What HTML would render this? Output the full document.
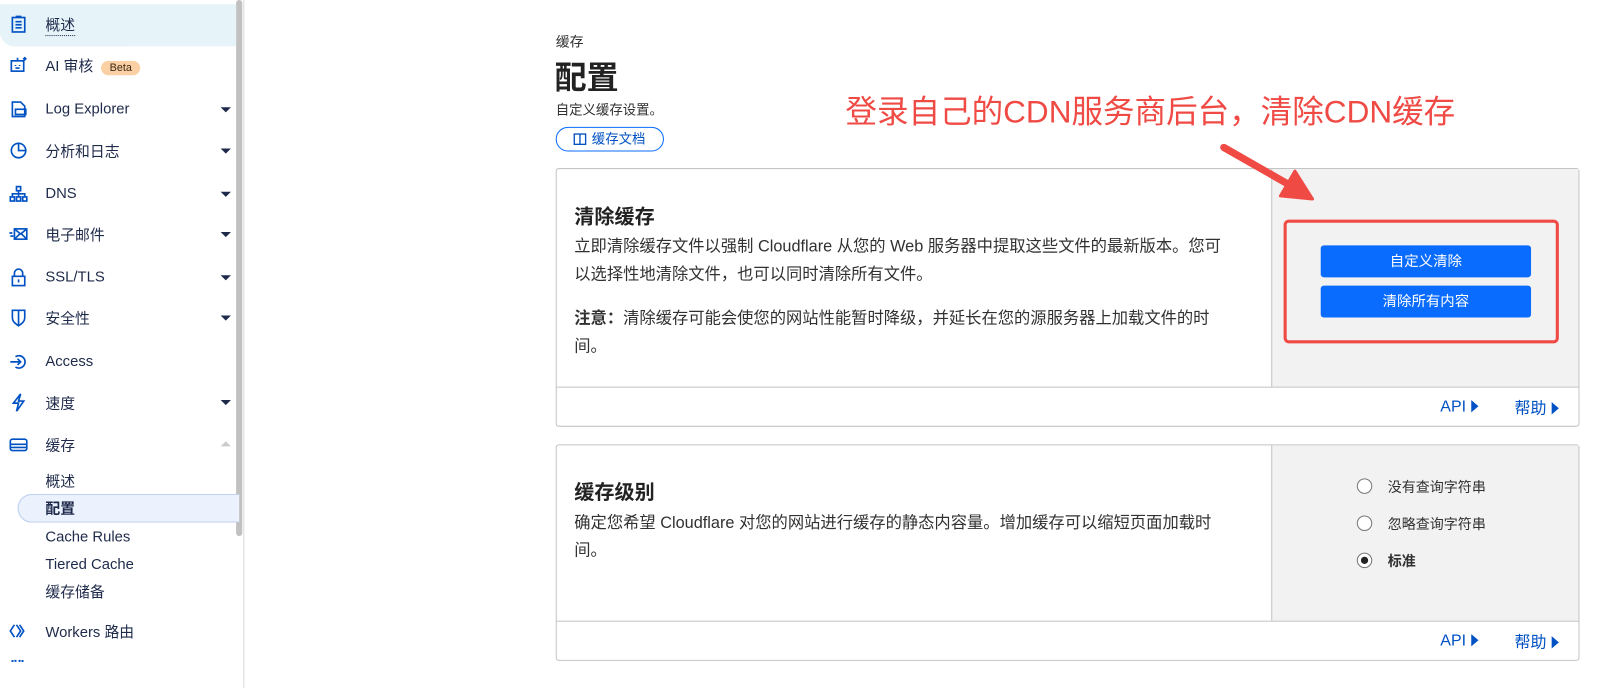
<!DOCTYPE html>
<html><head><meta charset="utf-8"><style>
*{margin:0;padding:0;box-sizing:border-box}
body{width:1617px;height:667px;overflow:hidden;background:#fff;font-family:"Liberation Sans","Noto Sans CJK SC",sans-serif;color:#313131;position:relative}
#w{position:absolute;left:0;top:0;width:1568px;height:647px;transform:scale(1.031);transform-origin:0 0}
.abs{position:absolute}
.side{position:absolute;left:0;top:0;width:237px;height:667px;border-right:1px solid #d9d9d9}
.item{position:absolute;left:0;width:229px;height:40px;font-size:14.4px;color:#1e2a4a;display:flex;align-items:center}
.item .ic{position:absolute;left:9px;top:11px;width:18px;height:18px}
.item .t{position:absolute;left:44px}
.caret{position:absolute;right:5px;top:18px;width:0;height:0;border-left:5px solid transparent;border-right:5px solid transparent;border-top:5px solid #1e2a4a}
.sub{position:absolute;left:44px;font-size:14.4px;color:#1e2a4a}
.card{position:absolute;left:539px;width:993px;border:1px solid #c4c4c4;border-radius:3px;background:#fff}
.gray{position:absolute;right:0;top:0;width:298px;background:#f2f2f2;border-left:1px solid #c4c4c4}
.btn{position:absolute;left:1281px;width:204px;height:31px;background:#0a6cff;border-radius:3px;color:#fff;font-size:14px;text-align:center;line-height:31px}
.lnk{position:absolute;font-size:15.5px;color:#0051c3}
.tri{display:inline-block;width:0;height:0;border-top:6px solid transparent;border-bottom:6px solid transparent;border-left:7px solid #0051c3;margin-left:5px;vertical-align:-1px}
.p{font-size:15.8px;line-height:27px;color:#313131}
.radio{position:absolute;left:1316px;width:15px;height:15px;border:1px solid #777;border-radius:50%;background:#fff}
.rl{position:absolute;left:1346px;font-size:13.6px;color:#313131}
</style></head><body><div id="w">
<div class="side">
 <div class="abs" style="left:229px;top:0;width:6px;height:520px;background:#c1c1c1;border-radius:3px"></div>
 <div class="abs" style="left:0;top:4px;width:229px;height:41px;background:#e6f4fa;border-radius:0 0 0 14px"></div>
 <div class="item" style="top:4px"><svg class="ic" viewBox="0 0 18 18" fill="none" stroke="#0051c3" stroke-width="1.6"><rect x="3" y="2" width="12" height="14"/><path d="M6 6h6M6 9h6M6 12h6M7 2V1h4v1"/></svg><span class="t" style="border-bottom:1px dotted #1e2a4a">概述</span></div>
 <div class="item" style="top:43px"><svg class="ic" viewBox="0 0 18 18" fill="none" stroke="#0051c3" stroke-width="1.6"><rect x="2" y="5" width="12" height="10"/><path d="M6 9v1M10 9v1M6 12h4M8 5V2"/><path d="M15 2l1 1-1 1-1-1z" fill="#0051c3"/></svg><span class="t">AI 审核 <span style="display:inline-block;background:#fbd0a5;color:#3b2a15;font-size:10.5px;border-radius:9px;padding:1px 8px;margin-left:4px">Beta</span></span></div>
 <div class="item" style="top:86px"><svg class="ic" viewBox="0 0 18 18" fill="none" stroke="#0051c3" stroke-width="1.6"><path d="M3 2h8l4 4v10H3z"/><rect x="6" y="9" width="10" height="5"/></svg><span class="t">Log Explorer</span><span class="caret"></span></div>
 <div class="item" style="top:126px"><svg class="ic" viewBox="0 0 18 18" fill="none" stroke="#0051c3" stroke-width="1.6"><circle cx="9" cy="9" r="7"/><path d="M9 2v7h7"/></svg><span class="t">分析和日志</span><span class="caret"></span></div>
 <div class="item" style="top:168px"><svg class="ic" viewBox="0 0 18 18" fill="none" stroke="#0051c3" stroke-width="1.6"><rect x="7" y="2" width="4" height="4"/><rect x="1" y="12" width="4" height="4"/><rect x="7" y="12" width="4" height="4"/><rect x="13" y="12" width="4" height="4"/><path d="M9 6v6M3 12V9h12v3"/></svg><span class="t">DNS</span><span class="caret"></span></div>
 <div class="item" style="top:207px"><svg class="ic" viewBox="0 0 18 18" fill="none" stroke="#0051c3" stroke-width="1.6"><rect x="5" y="4" width="12" height="10"/><path d="M5 4l6 5 6-5M5 14l5-5M17 14l-5-5M0 8h3M1 11h3"/></svg><span class="t">电子邮件</span><span class="caret"></span></div>
 <div class="item" style="top:249px"><svg class="ic" viewBox="0 0 18 18" fill="none" stroke="#0051c3" stroke-width="1.6"><rect x="3" y="8" width="12" height="9"/><path d="M5 8V5a4 4 0 018 0v3M9 11v3"/></svg><span class="t">SSL/TLS</span><span class="caret"></span></div>
 <div class="item" style="top:288px"><svg class="ic" viewBox="0 0 18 18" fill="none" stroke="#0051c3" stroke-width="1.6"><path d="M3 2h12v7c0 4-3 6-6 8-3-2-6-4-6-8z"/><path d="M9 2v14"/></svg><span class="t">安全性</span><span class="caret"></span></div>
 <div class="item" style="top:331px"><svg class="ic" viewBox="0 0 18 18" fill="none" stroke="#0051c3" stroke-width="1.6"><path d="M6 4a6 6 0 110 10"/><path d="M1 9h10M8 6l3 3-3 3"/></svg><span class="t">Access</span></div>
 <div class="item" style="top:370px"><svg class="ic" viewBox="0 0 18 18" fill="none" stroke="#0051c3" stroke-width="1.6"><path d="M11 1L4 10h5l-2 8 7-10H9z"/></svg><span class="t">速度</span><span class="caret"></span></div>
 <div class="item" style="top:411px"><svg class="ic" viewBox="0 0 18 18" fill="none" stroke="#0051c3" stroke-width="1.6"><rect x="1" y="4" width="16" height="11" rx="2"/><path d="M1 9h16M1 12h16"/></svg><span class="t">缓存</span><span class="caret" style="border-top:none;border-bottom:5px solid #ccc;top:17px"></span></div>
 <div class="sub" style="top:456px">概述</div>
 <div class="abs" style="left:17px;top:479px;width:215px;height:28px;background:#ebf2fd;border:1px solid #b8cdf0;border-right:none;border-radius:14px 0 0 14px"></div>
 <div class="sub" style="top:482px;font-weight:bold">配置</div>
 <div class="sub" style="top:513px">Cache Rules</div>
 <div class="sub" style="top:540px">Tiered Cache</div>
 <div class="sub" style="top:563px">缓存储备</div>
 <div class="item" style="top:592px"><svg class="ic" viewBox="0 0 18 18" fill="none" stroke="#0051c3" stroke-width="1.6"><path d="M5 3L1 9l4 6M10 3l4 6-4 6M7 3l4 6-4 6"/></svg><span class="t">Workers 路由</span></div>
 <div class="abs" style="left:11px;top:640px;width:12px;height:0;border-top:2px dotted #0051c3"></div>
</div>

<div class="abs" style="left:539px;top:29px;font-size:13.5px">缓存</div>
<div class="abs" style="left:538px;top:50px;font-size:31px;font-weight:bold;color:#222">配置</div>
<div class="abs" style="left:539px;top:96px;font-size:13px">自定义缓存设置。</div>
<div class="abs" style="left:539px;top:123px;width:105px;height:24px;border:1px solid #0a6cff;border-radius:12px;font-size:13px;color:#0051c3;line-height:22px;padding-left:34px">缓存文档
 <svg class="abs" style="left:16px;top:5px" width="13" height="12" viewBox="0 0 13 12" fill="none" stroke="#0051c3" stroke-width="1.3"><rect x="1" y="1" width="11" height="10"/><path d="M6.5 1v10"/></svg></div>

<div class="abs" style="left:820px;top:84px;font-size:30.6px;color:#f04a45;white-space:nowrap">登录自己的CDN服务商后台，清除CDN缓存</div>

<div class="card" style="top:163px;height:251px">
 <div class="gray" style="height:211px;width:298px"></div>
 <div class="abs" style="left:0;top:211px;width:100%;border-top:1px solid #c4c4c4"></div>
</div>
<div class="abs" style="left:557px;top:194px;font-size:19.5px;font-weight:bold;color:#222">清除缓存</div>
<div class="abs p" style="left:557px;top:226px;width:640px">立即清除缓存文件以强制 Cloudflare 从您的 Web 服务器中提取这些文件的最新版本。您可以选择性地清除文件，也可以同时清除所有文件。</div>
<div class="abs p" style="left:557px;top:296px;width:640px"><b>注意：</b>清除缓存可能会使您的网站性能暂时降级，并延长在您的源服务器上加载文件的时间。</div>
<div class="abs" style="left:1245px;top:213px;width:267px;height:120px;border:3px solid #f04a45;border-radius:5px"></div>
<div class="btn" style="top:238px">自定义清除</div>
<div class="btn" style="top:277px">清除所有内容</div>
<div class="lnk" style="left:1397px;top:386px">API<span class="tri"></span></div>
<div class="lnk" style="left:1469px;top:384px">帮助<span class="tri"></span></div>

<div class="card" style="top:431px;height:210px">
 <div class="gray" style="height:170px"></div>
 <div class="abs" style="left:0;top:170px;width:100%;border-top:1px solid #c4c4c4"></div>
</div>
<div class="abs" style="left:557px;top:461px;font-size:19.5px;font-weight:bold;color:#222">缓存级别</div>
<div class="abs p" style="left:557px;top:494px;width:640px">确定您希望 Cloudflare 对您的网站进行缓存的静态内容量。增加缓存可以缩短页面加载时间。</div>
<div class="radio" style="top:464px"></div><div class="rl" style="top:461px">没有查询字符串</div>
<div class="radio" style="top:500px"></div><div class="rl" style="top:497px">忽略查询字符串</div>
<div class="radio" style="top:536px"><div class="abs" style="left:3px;top:3px;width:7px;height:7px;border-radius:50%;background:#222"></div></div><div class="rl" style="top:533px;font-weight:bold">标准</div>
<div class="lnk" style="left:1397px;top:613px">API<span class="tri"></span></div>
<div class="lnk" style="left:1469px;top:611px">帮助<span class="tri"></span></div>

<svg class="abs" style="left:1178px;top:135px;overflow:visible" width="110" height="70" viewBox="0 0 110 70"><path d="M9 8L72 44" stroke="#f04a45" stroke-width="7" stroke-linecap="round"/><path d="M95 58L64 55 78 31z" fill="#f04a45" stroke="#f04a45" stroke-width="3" stroke-linejoin="round"/></svg>
</div></body></html>
